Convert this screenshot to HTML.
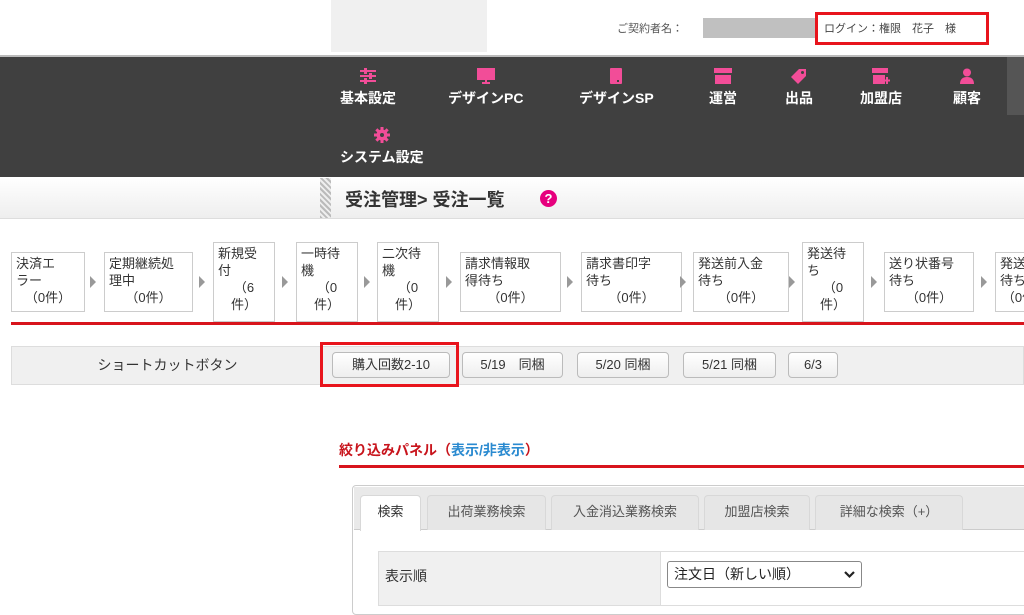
<!DOCTYPE html>
<html><head><meta charset="utf-8"><style>
*{margin:0;padding:0;box-sizing:border-box}
body{width:1024px;height:605px;overflow:hidden;background:#fff;position:relative;font-family:"Liberation Sans","Noto Sans CJK JP",sans-serif;color:#333}
.a{position:absolute}
.nav{left:0;top:55px;width:1024px;height:122px;background:#404040;border-top:2px solid #bbb}
.ni{position:absolute;color:#fff;font-size:14px;text-align:center;white-space:nowrap;font-weight:bold}
.ni svg{display:block;margin:0 auto 4px}
.sb{background:#fff;border:1px solid #ccc;font-size:13px;line-height:17px;padding:2px 4px;color:#333;white-space:nowrap;overflow:hidden}
.sb span{display:block;text-align:center}
.ar{width:0;height:0;border-left:6px solid #999;border-top:6px solid transparent;border-bottom:6px solid transparent}
.btn{position:absolute;top:352px;height:26px;border:1px solid #bbb;border-radius:4px;background:linear-gradient(#fff,#eee);font-size:13px;line-height:24px;text-align:center;color:#333}
.tab{position:absolute;top:495px;height:35px;background:#e6e6e6;border:1px solid #d8d8d8;border-bottom:none;border-radius:4px 4px 0 0;font-size:13px;line-height:32px;text-align:center;color:#555}
</style></head><body>
<div class="a" style="left:331px;top:0;width:156px;height:52px;background:#f0f0f0"></div>
<div class="a" style="left:617px;top:20px;font-size:11px;color:#555">ご契約者名：</div>
<div class="a" style="left:703px;top:18px;width:115px;height:20px;background:#c0c0c0"></div>
<div class="a" style="left:815px;top:12px;width:174px;height:33px;border:3px solid #e8141c"></div>
<div class="a" style="left:824px;top:20px;font-size:11px;color:#444">ログイン：権限　花子　様</div>

<div class="a nav"></div>
<div class="a" style="left:1007px;top:57px;width:17px;height:58px;background:#555"></div>
<div class="ni" style="left:340px;top:68px"><svg width="18" height="16" viewBox="0 0 18 16" fill="#f24d98"><rect x="1" y="2" width="16" height="2"/><rect x="1" y="7" width="16" height="2"/><rect x="1" y="12" width="16" height="2"/><rect x="5" y="0" width="3" height="6"/><rect x="10" y="5" width="3" height="6"/><rect x="5" y="10" width="3" height="6"/></svg>基本設定</div>
<div class="ni" style="left:448px;top:68px"><svg width="20" height="16" viewBox="0 0 20 16" fill="#f24d98"><rect x="1" y="0" width="18" height="12"/><rect x="9" y="12" width="2" height="3"/><rect x="6" y="14" width="8" height="2"/></svg>デザインPC</div>
<div class="ni" style="left:579px;top:68px"><svg width="12" height="16" viewBox="0 0 12 16" fill="#f24d98"><rect x="0" y="0" width="12" height="16" rx="1"/><rect x="7" y="12" width="2" height="2" fill="#404040"/></svg>デザインSP</div>
<div class="ni" style="left:709px;top:68px"><svg width="18" height="16" viewBox="0 0 18 16" fill="#f24d98"><rect x="0" y="0" width="18" height="5"/><rect x="1" y="7" width="16" height="9"/></svg>運営</div>
<div class="ni" style="left:785px;top:68px"><svg width="18" height="16" viewBox="0 0 18 16" fill="#f24d98"><path d="M9 1h7v7l-8 8-7-7z"/><circle cx="12.5" cy="4.5" r="1.5" fill="#404040"/></svg>出品</div>
<div class="ni" style="left:860px;top:68px"><svg width="20" height="16" viewBox="0 0 20 16" fill="#f24d98"><rect x="1" y="0" width="16" height="5"/><rect x="2" y="7" width="12" height="9"/><rect x="15" y="9" width="2" height="7"/><rect x="13" y="11.5" width="6" height="2"/></svg>加盟店</div>
<div class="ni" style="left:953px;top:68px"><svg width="16" height="16" viewBox="0 0 16 16" fill="#f24d98"><circle cx="8" cy="4.5" r="4"/><path d="M1 16c0-5 3-7 7-7s7 2 7 7z"/></svg>顧客</div>
<div class="ni" style="left:340px;top:127px"><svg width="16" height="16" viewBox="0 0 16 16" fill="#f24d98"><circle cx="8" cy="8" r="5.5"/><rect x="6.5" y="0" width="3" height="16"/><rect x="0" y="6.5" width="16" height="3"/><rect x="6.5" y="0" width="3" height="16" transform="rotate(45 8 8)"/><rect x="6.5" y="0" width="3" height="16" transform="rotate(-45 8 8)"/><circle cx="8" cy="8" r="2" fill="#404040"/></svg>システム設定</div>

<div class="a" style="left:0;top:178px;width:1024px;height:41px;background:linear-gradient(#fff,#eee);border-bottom:1px solid #ddd"></div>
<div class="a" style="left:320px;top:178px;width:11px;height:40px;background:repeating-linear-gradient(45deg,#bbb 0 2px,#eee 2px 4px)"></div>
<div class="a" style="left:345px;top:186px;font-size:18px;font-weight:bold;color:#333">受注管理&gt; 受注一覧</div>
<div class="a" style="left:540px;top:190px;width:17px;height:17px;border-radius:50%;background:#e6007e;color:#fff;font-size:13px;font-weight:bold;text-align:center;line-height:17px">?</div>

<div class="a sb" style="left:11px;top:252px;width:74px;height:60px">決済エ<br>ラー<span>（0件）</span></div>
<div class="a ar" style="left:90px;top:276px"></div>
<div class="a sb" style="left:104px;top:252px;width:89px;height:60px">定期継続処<br>理中<span>（0件）</span></div>
<div class="a ar" style="left:199px;top:276px"></div>
<div class="a sb" style="left:213px;top:242px;width:62px;height:80px">新規受<br>付<span>（6<br>件）</span></div>
<div class="a ar" style="left:282px;top:276px"></div>
<div class="a sb" style="left:296px;top:242px;width:62px;height:80px">一時待<br>機<span>（0<br>件）</span></div>
<div class="a ar" style="left:364px;top:276px"></div>
<div class="a sb" style="left:377px;top:242px;width:62px;height:80px">二次待<br>機<span>（0<br>件）</span></div>
<div class="a ar" style="left:446px;top:276px"></div>
<div class="a sb" style="left:460px;top:252px;width:101px;height:60px">請求情報取<br>得待ち<span>（0件）</span></div>
<div class="a ar" style="left:567px;top:276px"></div>
<div class="a sb" style="left:581px;top:252px;width:101px;height:60px">請求書印字<br>待ち<span>（0件）</span></div>
<div class="a ar" style="left:680px;top:276px"></div>
<div class="a sb" style="left:693px;top:252px;width:96px;height:60px">発送前入金<br>待ち<span>（0件）</span></div>
<div class="a ar" style="left:789px;top:276px"></div>
<div class="a sb" style="left:802px;top:242px;width:62px;height:80px">発送待<br>ち<span>（0<br>件）</span></div>
<div class="a ar" style="left:871px;top:276px"></div>
<div class="a sb" style="left:884px;top:252px;width:90px;height:60px">送り状番号<br>待ち<span>（0件）</span></div>
<div class="a ar" style="left:981px;top:276px"></div>
<div class="a sb" style="left:995px;top:252px;width:60px;height:60px">発送<br>待ち<span>（0件）</span></div>
<div class="a" style="left:11px;top:322px;width:1013px;height:3px;background:#d8141c"></div>

<div class="a" style="left:11px;top:346px;width:1013px;height:39px;background:#f0f0f0;border:1px solid #ddd"></div>
<div class="a" style="left:11px;top:355px;width:313px;text-align:center;font-size:14px;color:#333">ショートカットボタン</div>
<div class="a" style="left:320px;top:342px;width:139px;height:45px;border:3px solid #e8141c"></div>
<div class="btn" style="left:332px;width:118px">購入回数2-10</div>
<div class="btn" style="left:462px;width:101px">5/19　同梱</div>
<div class="btn" style="left:577px;width:92px">5/20 同梱</div>
<div class="btn" style="left:683px;width:93px">5/21 同梱</div>
<div class="btn" style="left:788px;width:50px">6/3</div>

<div class="a" style="left:339px;top:440px;font-size:14px;font-weight:bold;color:#c8141c">絞り込みパネル（<span style="color:#2a8ad0">表示/非表示</span>）</div>
<div class="a" style="left:339px;top:465px;width:685px;height:3px;background:#d8141c"></div>

<div class="a" style="left:352px;top:485px;width:680px;height:130px;border:1px solid #ccc;border-radius:4px;background:#fff"></div>
<div class="a" style="left:354px;top:487px;width:670px;height:43px;background:#e9e9e9;border-bottom:1px solid #ccc"></div>
<div class="tab" style="left:360px;width:61px;background:#fff;height:36px;color:#333">検索</div>
<div class="tab" style="left:427px;width:119px">出荷業務検索</div>
<div class="tab" style="left:551px;width:148px">入金消込業務検索</div>
<div class="tab" style="left:704px;width:106px">加盟店検索</div>
<div class="tab" style="left:815px;width:148px">詳細な検索（+）</div>

<div class="a" style="left:378px;top:551px;width:660px;height:55px;border:1px solid #ddd"></div>
<div class="a" style="left:379px;top:552px;width:282px;height:53px;background:#f0f0f0;border-right:1px solid #ddd"></div>
<div class="a" style="left:385px;top:566px;font-size:14px;color:#333">表示順</div>
<div class="a" style="left:667px;top:561px;width:195px;height:27px;border:1px solid #888;border-radius:3px;background:#fff;font-size:14px;line-height:25px;padding-left:6px;color:#222">注文日（新しい順）<svg style="position:absolute;right:6px;top:9px" width="11" height="8" viewBox="0 0 11 8"><path d="M1 1l4.5 4.5L10 1" stroke="#222" stroke-width="2.2" fill="none"/></svg></div>
</body></html>
